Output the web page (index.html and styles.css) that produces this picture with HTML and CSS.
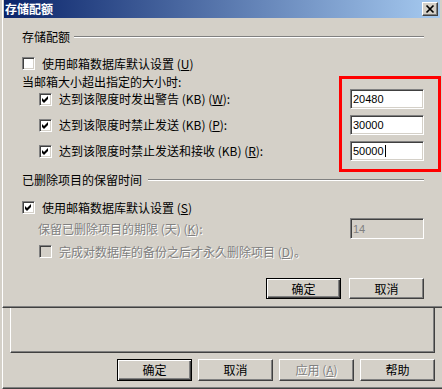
FILE: index.html
```html
<!DOCTYPE html>
<html lang="zh-CN">
<head>
    <meta charset="UTF-8">
    <meta name="viewport" content="width=device-width, initial-scale=1.0">
    <title>存储配额</title>
    <link rel="stylesheet" href="styles.css">
</head>
<body>
    <div class="dialog">
        <div class="caption">
            <span class="caption-title">存储配额</span>
            <span class="caption-close">
                <svg width="14" height="12" viewBox="0 0 14 12"><path d="M3.5 2.5 L10.5 9.5 M10.5 2.5 L3.5 9.5" stroke="#000" stroke-width="1.7" fill="none"/></svg>
            </span>
        </div>
        <div class="dialog-body">
            <div class="group-head">存储配额</div>
            <div class="check-row first">
                <span class="check"></span>
                <span>使用邮箱数据库默认设置 (<u>U</u>)</span>
            </div>
            <div class="sub-head">当邮箱大小超出指定的大小时:</div>
            <div class="limit-list">
                <div class="limit-row">
                    <div class="check-row indent">
                        <span class="check"><svg width="11" height="11" viewBox="0 0 11 11"><polygon points="2,4 4,6 8,2 8,5 4,9 2,7" fill="#000"/></svg></span>
                        <span>达到该限度时发出警告 (KB) (<u>W</u>):</span>
                    </div>
                    <div class="field">20480</div>
                </div>
                <div class="limit-row">
                    <div class="check-row indent">
                        <span class="check"><svg width="11" height="11" viewBox="0 0 11 11"><polygon points="2,4 4,6 8,2 8,5 4,9 2,7" fill="#000"/></svg></span>
                        <span>达到该限度时禁止发送 (KB) (<u>P</u>):</span>
                    </div>
                    <div class="field">30000</div>
                </div>
                <div class="limit-row">
                    <div class="check-row indent">
                        <span class="check"><svg width="11" height="11" viewBox="0 0 11 11"><polygon points="2,4 4,6 8,2 8,5 4,9 2,7" fill="#000"/></svg></span>
                        <span>达到该限度时禁止发送和接收 (KB) (<u>R</u>):</span>
                    </div>
                    <div class="field">50000<span class="caret"></span></div>
                </div>
            </div>

            <div class="group-head second">已删除项目的保留时间</div>
            <div class="check-row keep">
                <span class="check"><svg width="11" height="11" viewBox="0 0 11 11"><polygon points="2,4 4,6 8,2 8,5 4,9 2,7" fill="#000"/></svg></span>
                <span>使用邮箱数据库默认设置 (<u>S</u>)</span>
            </div>
            <div class="keep-row">
                <span class="disabled-text">保留已删除项目的期限 (天) (<u>K</u>):</span>
                <div class="field disabled">14</div>
            </div>
            <div class="check-row indent backup">
                <span class="check disabled"></span>
                <span class="disabled-text">完成对数据库的备份之后才永久删除项目 (<u>D</u>)。</span>
            </div>

            <div class="dialog-buttons">
                <button class="btn default">确定</button>
                <button class="btn">取消</button>
            </div>
        </div>
    </div>

    <div class="sheet">
        <div class="tab-panel"></div>
        <div class="sheet-buttons">
            <button class="btn default tall">确定</button>
            <button class="btn tall">取消</button>
            <button class="btn tall" disabled><span class="disabled-text">应用 (<u>A</u>)</span></button>
            <button class="btn tall">帮助</button>
        </div>
    </div>

    <div class="highlight"></div>
</body>
</html>
```

FILE: styles.css
```css
body {
    margin: 0;
    width: 442px;
    height: 389px;
    overflow: hidden;
    background-color: #d4d0c8;
    font-family: "Noto Sans CJK SC", sans-serif;
    font-size: 12px;
    color: #000;
}
u {
    text-decoration: underline;
}

/* dialog on top */
.dialog {
    box-sizing: border-box;
    height: 308px;
    margin-left: 2px;
    border-left: 1px solid #fff;
    border-bottom: 1px solid #404040;
    box-shadow: inset 0 -1px #808080;
}
.caption {
    height: 18px;
    margin: 0 2px 0 1px;
    background: linear-gradient(to right, #0a246a, #a6caf0);
    display: flex;
    align-items: center;
    justify-content: space-between;
}
.caption-title {
    color: #fff;
    font-weight: bold;
    line-height: 18px;
    padding-left: 1px;
}
.caption-close {
    box-sizing: border-box;
    width: 16px;
    height: 14px;
    margin-right: 2px;
    background-color: #d4d0c8;
    border: 1px solid;
    border-color: #fff #404040 #404040 #fff;
    box-shadow: inset -1px -1px #808080;
}
.caption-close svg {
    display: block;
}
.dialog-body {
    padding: 12px 18px 0 19px;
}
.group-head {
    display: flex;
    align-items: center;
    gap: 4px;
    height: 14px;
    line-height: 14px;
}
.group-head::after {
    content: "";
    flex: 1;
    height: 0;
    border-top: 1px solid #808080;
    border-bottom: 1px solid #fff;
}
.group-head.second {
    margin-top: 12px;
    gap: 6px;
}
.check-row {
    display: flex;
    align-items: center;
    gap: 7px;
    height: 13px;
    line-height: 14px;
    white-space: nowrap;
}
.check-row.first {
    margin-top: 13px;
}
.check-row.indent {
    padding-left: 17px;
}
.check-row.keep {
    margin-top: 14px;
}
.check-row.backup {
    margin-top: 6px;
}
.check {
    box-sizing: border-box;
    width: 13px;
    height: 13px;
    flex: none;
    background-color: #fff;
    border: 1px solid;
    border-color: #808080 #fff #fff #808080;
    box-shadow: inset 1px 1px #404040, inset -1px -1px #d4d0c8;
}
.check svg {
    display: block;
}
.check.disabled {
    background-color: #d4d0c8;
}
.sub-head {
    margin-top: 5px;
    height: 14px;
    line-height: 14px;
}
.limit-list {
    display: flex;
    flex-direction: column;
    gap: 6px;
}
.limit-row {
    display: flex;
    align-items: center;
    justify-content: space-between;
    height: 20px;
}
.field {
    box-sizing: border-box;
    width: 74px;
    height: 20px;
    padding-left: 2px;
    background-color: #fff;
    border: 1px solid;
    border-color: #808080 #fff #fff #808080;
    box-shadow: inset 1px 1px #404040, inset -1px -1px #d4d0c8;
    font-family: "Liberation Sans", Arial, sans-serif;
    font-size: 11px;
    line-height: 18px;
    display: flex;
    align-items: center;
}
.field.disabled {
    height: 21px;
    background-color: #d4d0c8;
    color: #808080;
}
.caret {
    width: 1px;
    height: 12px;
    margin-left: 1px;
    background-color: #000;
}
.keep-row {
    display: flex;
    align-items: center;
    justify-content: space-between;
    height: 21px;
    margin-top: 4px;
    padding-left: 16px;
    line-height: 14px;
}
.disabled-text {
    color: #808080;
    text-shadow: 1px 1px #fff;
}
.dialog-buttons {
    display: flex;
    justify-content: flex-end;
    gap: 8px;
    margin-top: 20px;
}

/* buttons */
.btn {
    box-sizing: border-box;
    width: 75px;
    height: 21px;
    padding: 0;
    background-color: #d4d0c8;
    border: 1px solid;
    border-color: #fff #404040 #404040 #fff;
    box-shadow: inset -1px -1px #808080;
    font-family: "Noto Sans CJK SC", sans-serif;
    font-size: 12px;
    line-height: 14px;
    color: #000;
}
.btn.default {
    border-color: #000;
    box-shadow: inset 1px 1px #fff, inset -1px -1px #404040, inset -2px -2px #808080;
}
.btn.tall {
    height: 22px;
}

/* property sheet behind the dialog */
.sheet {
    box-sizing: border-box;
    height: 81px;
    margin-left: 2px;
    border-left: 1px solid #fff;
    border-bottom: 1px solid #404040;
    box-shadow: inset 0 -1px #808080;
}
.tab-panel {
    box-sizing: border-box;
    width: 425px;
    height: 45px;
    margin-left: 7px;
    border-left: 1px solid #fff;
    border-right: 1px solid #404040;
    border-bottom: 1px solid #404040;
    box-shadow: inset -1px -1px #808080;
}
.sheet-buttons {
    display: flex;
    justify-content: flex-end;
    gap: 6px;
    margin-top: 6px;
    padding-right: 7px;
}

/* red annotation frame */
.highlight {
    position: absolute;
    left: 339px;
    top: 76px;
    width: 96px;
    height: 90px;
    border: 3px solid #ff0000;
}
```
